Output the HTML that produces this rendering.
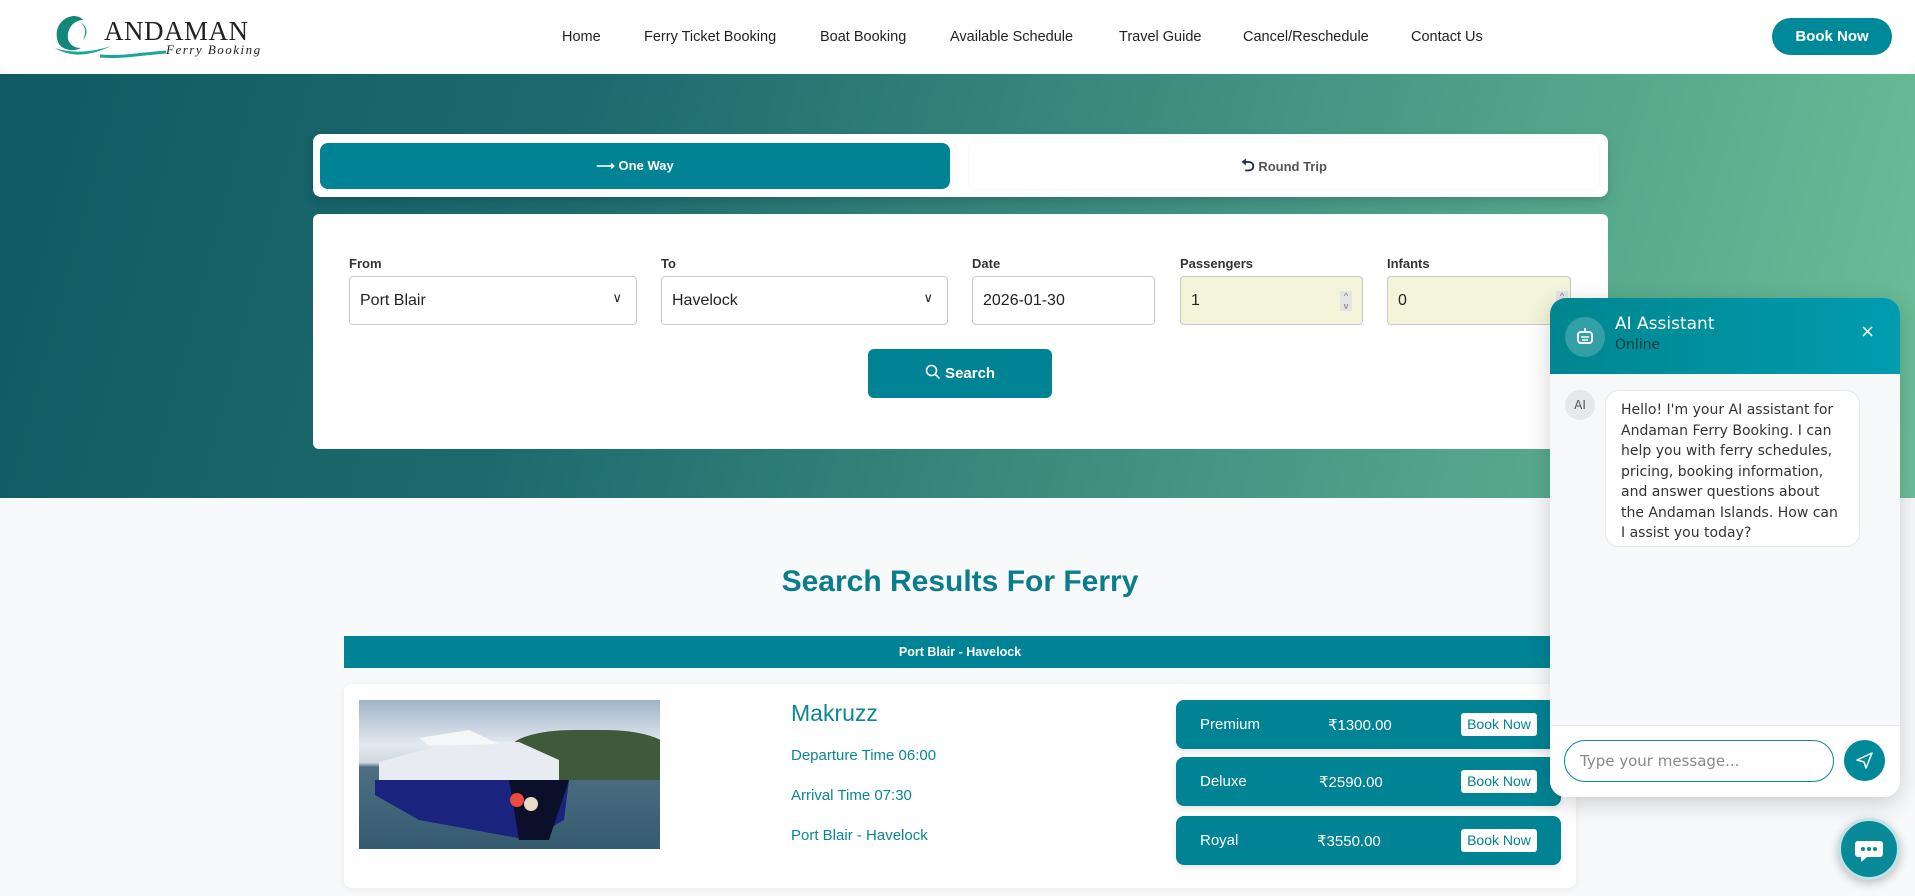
<!DOCTYPE html>
<html><head><meta charset="utf-8"><style>
*{box-sizing:border-box;margin:0;padding:0}
body{width:1915px;height:896px;overflow:hidden;background:#f8f9fa;font-family:"Liberation Sans",sans-serif;position:relative}
.n{font-family:"Liberation Sans",sans-serif}
.abs{position:absolute}
header{position:absolute;left:0;top:0;width:1915px;height:74px;background:#fff;border-radius:0 0 14px 14px;z-index:2}
.nav{position:absolute;top:29px;font-size:14.5px;color:#222}
.hero{position:absolute;left:0;top:74px;width:1915px;height:424px;background:linear-gradient(105deg,#0f5a63 0%,#1d6b6e 30%,#3f9080 60%,#6cbf98 100%)}
.card{position:absolute;background:#fff;border-radius:8px}
.lbl{position:absolute;top:256px;font-size:13px;font-weight:bold;color:#333}
.inp{position:absolute;top:276px;height:49px;border:1px solid #c9c9c9;border-radius:4px;background:#fff;font-size:16px;color:#222;padding:15px 10px}
.prow{position:absolute;left:1176px;width:385px;height:49px;background:#008394;border-radius:8px;color:#fff;font-size:15px;box-shadow:0 3px 6px rgba(0,0,0,.1)}
.prow span{position:absolute;top:16px}
.bn{position:absolute;left:285px;top:13px;width:76px;height:23px;background:#fff;border-radius:3px;color:#008394;font-size:14px;text-align:center;line-height:23px}
.blue{color:#0a8696}
</style></head><body>
<header>
 <svg class="abs" style="left:51px;top:12px" width="60" height="48" viewBox="0 0 60 48">
  <path d="M22 4 C8 6 2 20 8 32 C12 38 22 40 30 36 C20 36 14 28 18 18 C20 12 26 8 32 8 C30 5 26 4 22 4Z" fill="#138878"/>
  <path d="M28 10 C34 12 36 20 32 28 C38 22 36 12 28 10Z" fill="#1b9c8a"/>
  <path d="M4 36 C20 46 40 44 60 34 C42 40 22 42 4 36Z" fill="#1aa596"/>
 </svg>
 <div class="abs" style="left:104px;top:16px;font-family:'Liberation Serif',serif;font-size:27px;letter-spacing:0.5px;color:#222">ANDAMAN</div>
 <div class="abs" style="left:166px;top:42px;font-family:'Liberation Serif',serif;font-style:italic;font-size:13px;letter-spacing:1.5px;color:#222">Ferry Booking</div>
 <svg class="abs" style="left:100px;top:46px" width="66" height="14"><path d="M0 10 C20 12 40 8 66 6" stroke="#1aa596" stroke-width="3" fill="none"/></svg>
 <div class="nav" style="left:562px">Home</div>
 <div class="nav" style="left:644px">Ferry Ticket Booking</div>
 <div class="nav" style="left:820px">Boat Booking</div>
 <div class="nav" style="left:950px">Available Schedule</div>
 <div class="nav" style="left:1119px">Travel Guide</div>
 <div class="nav" style="left:1243px">Cancel/Reschedule</div>
 <div class="nav" style="left:1411px">Contact Us</div>
 <div class="abs n" style="left:1772px;top:18px;width:120px;height:37px;border-radius:19px;background:#008a99;color:#fff;font-weight:bold;font-size:15px;text-align:center;line-height:37px">Book Now</div>
</header>
<div class="hero"></div>
<div class="card" style="left:313px;top:134px;width:1295px;height:63px;box-shadow:0 4px 10px rgba(0,0,0,.15)">
 <div class="abs n" style="left:7px;top:9px;width:630px;height:46px;background:#008394;border-radius:8px;color:#fff;font-weight:bold;font-size:13px;text-align:center;line-height:46px">⟶ One Way</div>
 <div class="abs n" style="left:656px;top:9px;width:630px;height:46px;background:#fff;border-radius:8px;color:#555;font-weight:bold;font-size:13px;text-align:center;line-height:46px;box-shadow:0 0 4px rgba(0,0,0,.05)"><span style="color:#1f3160;font-size:17px">⮌</span> Round Trip</div>
</div>
<div class="card" style="left:313px;top:214px;width:1295px;height:235px;border-radius:6px"></div>
<div class="lbl n" style="left:349px">From</div>
<div class="lbl n" style="left:661px">To</div>
<div class="lbl n" style="left:972px">Date</div>
<div class="lbl n" style="left:1180px">Passengers</div>
<div class="lbl n" style="left:1387px">Infants</div>
<div class="inp n" style="left:349px;width:288px">Port Blair<span class="abs" style="right:14px;top:13px;font-size:13px">∨</span></div>
<div class="inp n" style="left:661px;width:287px">Havelock<span class="abs" style="right:14px;top:13px;font-size:13px">∨</span></div>
<div class="inp n" style="left:972px;width:183px">2026-01-30</div>
<div class="inp n" style="left:1180px;width:183px;background:#f4f4da">1<span class="abs" style="right:10px;top:14px;width:12px;height:20px;background:#e4e4e4;font-size:9px;color:#777;text-align:center;line-height:10px">^<br>v</span></div>
<div class="inp n" style="left:1387px;width:184px;background:#f4f4da">0<span class="abs" style="right:2px;top:14px;width:12px;height:20px;background:#e4e4e4;font-size:9px;color:#777;text-align:center;line-height:10px">^<br>v</span></div>
<div class="abs n" style="left:868px;top:349px;width:184px;height:49px;border-radius:6px;background:#008394;color:#fff;font-weight:bold;font-size:15px;text-align:center;line-height:49px">
 <svg width="16" height="16" viewBox="0 0 16 16" style="vertical-align:-2px"><circle cx="6.5" cy="6.5" r="5" stroke="#fff" stroke-width="1.6" fill="none"/><path d="M10 10l4.5 4.5" stroke="#fff" stroke-width="1.6"/></svg> Search</div>

<div class="abs n" style="left:0;width:1920px;top:565px;text-align:center;font-size:30px;font-weight:bold;color:#0a7d8c">Search Results For Ferry</div>
<div class="abs n" style="left:344px;top:636px;width:1232px;height:32px;background:#008394;color:#fff;font-weight:bold;font-size:12.5px;text-align:center;line-height:32px">Port Blair - Havelock</div>
<div class="card" style="left:344px;top:684px;width:1232px;height:204px;border-radius:8px;box-shadow:0 2px 8px rgba(0,0,0,.06)"></div>
<div class="abs" style="left:359px;top:700px;width:301px;height:149px;overflow:hidden;background:linear-gradient(#9fb3c8 0%,#e3e9ef 30%,#cfd8e0 42%,#4c6f83 45%,#355b70 100%)">
 <div class="abs" style="left:150px;top:30px;width:160px;height:50px;background:#3f5a3a;border-radius:40% 40% 0 0"></div>
 <svg class="abs" style="left:0;top:0" width="301" height="149">
  <path d="M20 62 L100 40 L160 42 L200 60 L200 80 L20 80Z" fill="#e8ecf0"/>
  <path d="M60 38 L110 30 L140 44 L70 46Z" fill="#f4f6f8"/>
  <path d="M16 80 L210 80 L205 120 L170 140 L60 120 L16 95Z" fill="#1a237e"/>
  <path d="M150 80 L210 80 L190 140 L160 140Z" fill="#0b0f2a"/>
  <circle cx="158" cy="100" r="7" fill="#e74c3c"/><circle cx="172" cy="104" r="7" fill="#e8d9c8"/>
 </svg>
</div>
<div class="abs n blue" style="left:791px;top:700px;font-size:23px">Makruzz</div>
<div class="abs n blue" style="left:791px;top:747px;font-size:15px">Departure Time 06:00</div>
<div class="abs n blue" style="left:791px;top:787px;font-size:15px">Arrival Time 07:30</div>
<div class="abs n blue" style="left:791px;top:827px;font-size:15px">Port Blair - Havelock</div>
<div class="prow n" style="top:700px"><span style="left:24px">Premium</span><span style="left:152px">₹1300.00</span><div class="bn">Book Now</div></div>
<div class="prow n" style="top:757px"><span style="left:24px">Deluxe</span><span style="left:143px">₹2590.00</span><div class="bn">Book Now</div></div>
<div class="prow n" style="top:816px"><span style="left:24px">Royal</span><span style="left:141px">₹3550.00</span><div class="bn">Book Now</div></div>

<div class="abs" style="left:1550px;top:298px;width:350px;height:499px;background:#f7f8fa;border-radius:16px;overflow:hidden;box-shadow:0 6px 24px rgba(0,0,0,.18);font-family:'DejaVu Sans',sans-serif">
 <div class="abs" style="left:0;top:0;width:350px;height:76px;background:linear-gradient(90deg,#00868f,#009cb0)"></div>
 <div class="abs" style="left:15px;top:19px;width:40px;height:40px;border-radius:50%;background:rgba(255,255,255,.2)">
  <svg width="40" height="40" viewBox="0 0 40 40"><rect x="13" y="15" width="14" height="11" rx="3" fill="none" stroke="#fff" stroke-width="2"/><path d="M20 11v4M16 20h8M17 23h6" stroke="#fff" stroke-width="1.6"/></svg></div>
 <div class="abs" style="left:65px;top:16px;color:#fff;font-size:17px">AI Assistant</div>
 <div class="abs" style="left:65px;top:39px;color:#1b3b3f;font-size:14px">Online</div>
 <div class="abs" style="left:310px;top:23px;color:#fff;font-size:18px">×</div>
 <div class="abs" style="left:15px;top:92px;width:30px;height:30px;border-radius:50%;background:#e6e8eb;color:#555;font-size:12px;text-align:center;line-height:30px">AI</div>
 <div class="abs" style="left:55px;top:92px;width:255px;height:157px;background:#fff;border:1px solid #e6e8eb;border-radius:14px;padding:9px 15px;font-size:14px;line-height:20.5px;color:#333">Hello! I'm your AI assistant for Andaman Ferry Booking. I can help you with ferry schedules, pricing, booking information, and answer questions about the Andaman Islands. How can I assist you today?</div>
 <div class="abs" style="left:0;top:427px;width:350px;height:72px;background:#fff;border-top:1px solid #e3e6ea"></div>
 <div class="abs" style="left:14px;top:442px;width:270px;height:42px;border:1px solid #0a8a99;border-radius:21px;background:#fff;color:#888;font-size:15px;padding:11px 15px">Type your message...</div>
 <div class="abs" style="left:294px;top:442px;width:41px;height:41px;border-radius:50%;background:#008a99">
  <svg width="41" height="41" viewBox="0 0 41 41"><path d="M13 20l15-7-6 15-2-6z" fill="none" stroke="#fff" stroke-width="1.5" stroke-linejoin="round"/></svg></div>
</div>
<div class="abs" style="left:1838px;top:818px;width:62px;height:62px;border-radius:50%;background:#0a8a99;border:3px solid #bfe3e6;box-shadow:0 3px 10px rgba(0,0,0,.25)">
 <svg width="56" height="56" viewBox="0 0 56 56"><path d="M17 20h22a3 3 0 0 1 3 3v10a3 3 0 0 1-3 3H26l-6 5v-5h-3a3 3 0 0 1-3-3V23a3 3 0 0 1 3-3z" fill="#fff"/><circle cx="22" cy="28" r="2" fill="#0a8a99"/><circle cx="28" cy="28" r="2" fill="#0a8a99"/><circle cx="34" cy="28" r="2" fill="#0a8a99"/></svg></div>
</body></html>
